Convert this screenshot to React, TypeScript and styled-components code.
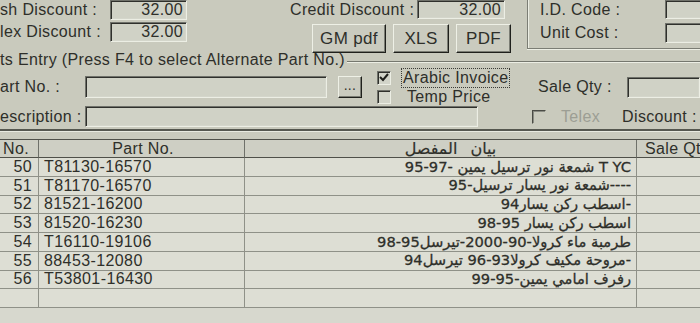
import React from "react";
import styled, { createGlobalStyle } from "styled-components";

const GlobalStyle = createGlobalStyle`
  html, body { margin: 0; padding: 0; overflow: hidden; background: #c9cabd; }
  body { font-family: "Liberation Sans", Arial, sans-serif; }
`;

const Page = styled.div`
  width: 700px;
  height: 323px;
  overflow: hidden;
  display: flex;
  flex-direction: column;
  background: #c9cabd;
  color: #2e2f2a;
  font-size: 16px;
  letter-spacing: 0.35px;
  line-height: 1;
`;

const TopSection = styled.div`
  display: flex;
  height: 50px;
  flex-shrink: 0;
`;

const Column = styled.div<{ $ml?: number; $w?: number; $gap?: number }>`
  display: flex;
  flex-direction: column;
  margin-left: ${(p) => p.$ml ?? 0}px;
  width: ${(p) => (p.$w ? `${p.$w}px` : "auto")};
  gap: ${(p) => p.$gap ?? 0}px;
  flex-shrink: 0;
`;

const FieldRow = styled.div<{ $h: number; $mt?: number }>`
  display: flex;
  align-items: center;
  height: ${(p) => p.$h}px;
  margin-top: ${(p) => p.$mt ?? 0}px;
  flex-shrink: 0;
  white-space: nowrap;
`;

const Label = styled.span<{ $w?: number; $ml?: number; $muted?: boolean }>`
  display: inline-block;
  width: ${(p) => (p.$w ? `${p.$w}px` : "auto")};
  margin-left: ${(p) => p.$ml ?? 0}px;
  flex-shrink: 0;
  color: ${(p) => (p.$muted ? "#9c9e94" : "inherit")};
`;

const Sunken = styled.div<{ $w: number; $h: number; $ml?: number }>`
  box-sizing: border-box;
  width: ${(p) => p.$w}px;
  height: ${(p) => p.$h}px;
  margin-left: ${(p) => p.$ml ?? 0}px;
  flex-shrink: 0;
  border: 1px solid;
  border-color: #6f716a #eceee4 #eceee4 #6f716a;
  box-shadow: inset 1px 1px 0 #2f302c, inset -1px -1px 0 #d4d6cb;
  background: #d0d2c6;
  display: flex;
  align-items: center;
  justify-content: flex-end;
  padding-right: 3px;
`;

const ButtonRow = styled.div`
  display: flex;
  gap: 7px;
  margin-top: 5px;
  margin-left: 22px;
`;

const Win98Button = styled.div<{ $w: number; $h: number; $ml?: number }>`
  box-sizing: border-box;
  width: ${(p) => p.$w}px;
  height: ${(p) => p.$h}px;
  margin-left: ${(p) => p.$ml ?? 0}px;
  flex-shrink: 0;
  border: 1px solid;
  border-color: #eef0e6 #1f201c #1f201c #eef0e6;
  box-shadow: inset -1px -1px 0 #7b7d74;
  background: #cacbbf;
  display: flex;
  align-items: center;
  justify-content: center;
  font-size: 17px;
`;

const DotsButton = styled(Win98Button)`
  align-items: flex-end;
  padding-bottom: 5px;
  font-size: 14px;
`;

const GroupBox = styled.div`
  flex: 1;
  margin-left: 15px;
  height: 49px;
  box-sizing: border-box;
  border-left: 1px solid #7b7d74;
  border-bottom: 1px solid #7b7d74;
  box-shadow: inset 1px 0 0 #eceee4, 0 1px 0 #eceee4;
  padding-left: 12px;
  display: flex;
  flex-direction: column;
  gap: 4px;
`;

const CaptionRow = styled.div`
  display: flex;
  align-items: center;
  height: 20px;
  flex-shrink: 0;
  white-space: nowrap;
`;

const EtchedLine = styled.div<{ $mt?: number }>`
  flex: 1;
  height: 0;
  margin-top: ${(p) => p.$mt ?? 0}px;
  border-top: 1px solid #75776e;
  border-bottom: 1px solid #eceee4;
  margin-left: 2px;
`;

const BottomRule = styled.div`
  height: 0;
  flex-shrink: 0;
  border-top: 2px solid #55574f;
  border-bottom: 1px solid #e8eae0;
`;

const EntryRow = styled.div<{ $h: number }>`
  display: flex;
  align-items: center;
  height: ${(p) => p.$h}px;
  flex-shrink: 0;
  white-space: nowrap;
`;

const CheckStack = styled.div`
  display: flex;
  flex-direction: column;
  gap: 5px;
  margin-left: 15px;
  width: 135px;
  flex-shrink: 0;
`;

const CheckItem = styled.div<{ $ml?: number }>`
  display: flex;
  align-items: center;
  height: 14px;
  margin-left: ${(p) => p.$ml ?? 0}px;
  flex-shrink: 0;
`;

const Box = styled.div<{ $disabled?: boolean }>`
  box-sizing: border-box;
  width: 14px;
  height: 14px;
  flex-shrink: 0;
  border: 1px solid;
  border-color: ${(p) =>
    p.$disabled ? "#4a4b45 transparent transparent #4a4b45" : "#6f716a #eceee4 #eceee4 #6f716a"};
  box-shadow: ${(p) => (p.$disabled ? "inset 1px 1px 0 #8a8c83" : "inset 1px 1px 0 #2f302c")};
  background: ${(p) => (p.$disabled ? "transparent" : "#d2d4c9")};
  display: flex;
  align-items: center;
  justify-content: center;
`;

const CheckText = styled.span<{ $focus?: boolean; $ml: number; $muted?: boolean }>`
  margin-left: ${(p) => p.$ml}px;
  padding: 1px 1px;
  border: 1px dotted ${(p) => (p.$focus ? "#3a3b36" : "transparent")};
  color: ${(p) => (p.$muted ? "#9c9e94" : "inherit")};
`;

const Grid = styled.div`
  margin-top: 7px;
  flex: 1;
  display: grid;
  grid-template-columns: 39px 206px 392px 63px;
  grid-template-rows: 18px repeat(8, 18.75px);
  align-content: start;
  background: #d7d8ce;
  border-top: 1px solid #4f5049;
  width: 700px;
`;

const HeadCell = styled.div<{ $align?: string; $pl?: number; $open?: boolean }>`
  box-sizing: border-box;
  border-right: ${(p) => (p.$open ? "none" : "1px solid #6f716a")};
  border-bottom: 1px solid #4f5049;
  background: #cecfc4;
  display: flex;
  align-items: center;
  justify-content: ${(p) => p.$align ?? "center"};
  padding: 0 0 0 ${(p) => p.$pl ?? 3}px;
  font-size: 16px;
  white-space: nowrap;
  overflow: hidden;
`;

const ArabicHead = styled.span`
  font-family: "DejaVu Sans", sans-serif;
  font-size: 16px;
  word-spacing: 8px;
  letter-spacing: 0;
  -webkit-text-stroke: 0.2px #2e2f2a;
`;

const Cell = styled.div<{ $kind: "num" | "part" | "desc" | "qty" }>`
  box-sizing: border-box;
  border-right: ${(p) => (p.$kind === "qty" ? "none" : "1px solid #8f9188")};
  border-bottom: 1px solid #8f9188;
  background: #dddeD4;
  display: flex;
  align-items: center;
  white-space: nowrap;
  overflow: hidden;
  font-size: 16px;
  letter-spacing: 0.4px;
  justify-content: ${(p) => (p.$kind === "num" ? "flex-end" : "flex-start")};
  padding: ${(p) => (p.$kind === "num" ? "0 6px 0 0" : p.$kind === "part" ? "0 0 0 5px" : "0 5px 0 0")};
  direction: ${(p) => (p.$kind === "desc" ? "rtl" : "ltr")};
  font-family: ${(p) =>
    p.$kind === "desc" ? `"DejaVu Sans", sans-serif` : `"Liberation Sans", Arial, sans-serif`};
  ${(p) =>
    p.$kind === "desc" ? "font-size: 14.7px; letter-spacing: 0; -webkit-text-stroke: 0.3px #2e2f2a;" : ""}
`;

const Check = () => (
  <svg width="10" height="9" viewBox="0 0 10 9">
    <path d="M1 4 L4 7 L9 1" stroke="#1e1f1b" strokeWidth="2" fill="none" />
  </svg>
);

const rows: [string, string, string][] = [
  ["50", "T81130-16570", "T YC  شمعة نور ترسيل يمين -97-95"],
  ["51", "T81170-16570", "----شمعة نور يسار ترسيل-95"],
  ["52", "81521-16200", "-اسطب ركن يسار94"],
  ["53", "81520-16230", "اسطب ركن يسار 95-98"],
  ["54", "T16110-19106", "طرمبة ماء كرولا-90-2000-تيرسل95-98"],
  ["55", "88453-12080", "-مروحة مكيف كرولا93-96 تيرسل94"],
  ["56", "T53801-16430", "رفرف امامي يمين-95-99"],
  ["", "", ""],
];

export default function App() {
  return (
    <>
      <GlobalStyle />
      <Page>
        <TopSection>
          <Column $w={188} $gap={2}>
            <FieldRow $h={20}>
              <Label $w={110}>sh Discount :</Label>
              <Sunken $w={77} $h={20}>32.00</Sunken>
            </FieldRow>
            <FieldRow $h={20}>
              <Label $w={110}>lex Discount :</Label>
              <Sunken $w={77} $h={20}>32.00</Sunken>
            </FieldRow>
          </Column>
          <Column $ml={102} $w={222}>
            <FieldRow $h={19}>
              <Label $w={127}>Credit Discount :</Label>
              <Sunken $w={88} $h={19}>32.00</Sunken>
            </FieldRow>
            <ButtonRow>
              <Win98Button $w={74} $h={29}>GM pdf</Win98Button>
              <Win98Button $w={56} $h={29}>XLS</Win98Button>
              <Win98Button $w={55} $h={29}>PDF</Win98Button>
            </ButtonRow>
          </Column>
          <GroupBox>
            <FieldRow $h={19}>
              <Label $w={125}>I.D. Code :</Label>
              <Sunken $w={60} $h={19} />
            </FieldRow>
            <FieldRow $h={20}>
              <Label $w={125}>Unit Cost :</Label>
              <Sunken $w={60} $h={20} />
            </FieldRow>
          </GroupBox>
        </TopSection>

        <CaptionRow>
          <Label>ts Entry (Press F4 to select Alternate Part No.)</Label>
          <EtchedLine $mt={3} />
        </CaptionRow>

        <EntryRow $h={34}>
          <Label $w={85}>art No. :</Label>
          <Sunken $w={242} $h={22} />
          <DotsButton $w={24} $h={22} $ml={11}>...</DotsButton>
          <CheckStack>
            <CheckItem>
              <Box><Check /></Box>
              <CheckText $ml={10} $focus>Arabic Invoice</CheckText>
            </CheckItem>
            <CheckItem>
              <Box />
              <CheckText $ml={14}>Temp Price</CheckText>
            </CheckItem>
          </CheckStack>
          <Label $w={89} $ml={26}>Sale Qty :</Label>
          <Sunken $w={73} $h={21} />
        </EntryRow>

        <EntryRow $h={25}>
          <Label $w={85}>escription :</Label>
          <Sunken $w={393} $h={21} />
          <CheckItem $ml={54}>
            <Box $disabled />
            <CheckText $ml={13} $muted>Telex</CheckText>
          </CheckItem>
          <Label $ml={20}>Discount :</Label>
        </EntryRow>

        <BottomRule />

        <Grid>
          <HeadCell $align="flex-start">No.</HeadCell>
          <HeadCell>Part No.</HeadCell>
          <HeadCell $pl={20}>
            <ArabicHead dir="rtl">بيان المفصل</ArabicHead>
          </HeadCell>
          <HeadCell $align="flex-start" $pl={8} $open>Sale Qt</HeadCell>
          {rows.map(([n, p, d], i) => (
            <React.Fragment key={i}>
              <Cell $kind="num">{n}</Cell>
              <Cell $kind="part">{p}</Cell>
              <Cell $kind="desc">{d}</Cell>
              <Cell $kind="qty" />
            </React.Fragment>
          ))}
        </Grid>
      </Page>
    </>
  );
}
